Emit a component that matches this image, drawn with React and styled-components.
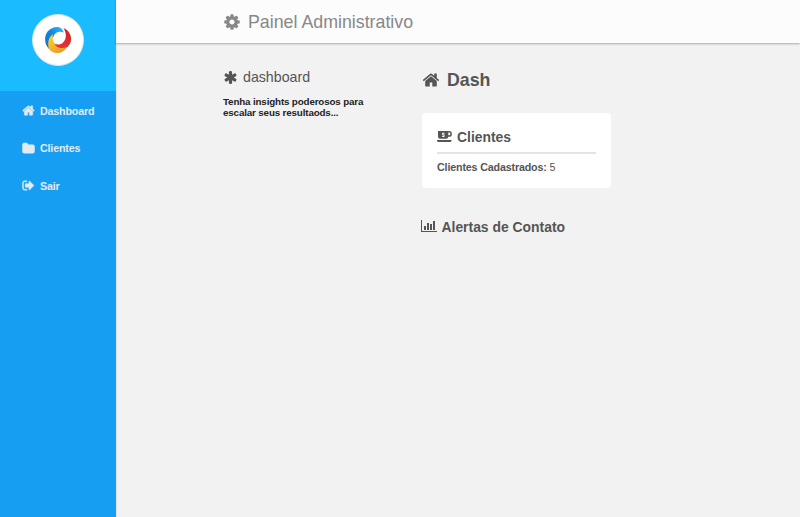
import React from "react";
import styled, { createGlobalStyle } from "styled-components";

const GlobalStyle = createGlobalStyle`
  * { box-sizing: border-box; }
  body {
    margin: 0;
    background: #f2f2f2;
    font-family: "Liberation Sans", Arial, sans-serif;
    color: #555;
  }
  h1, h2, h3, p { margin: 0; }
`;

const icons = {
  home: "M1472 992v480q0 26-19 45t-45 19h-384v-384h-256v384h-384q-26 0-45-19t-19-45v-480q0-1 .5-3t.5-3l575-474 575 474q1 2 1 6zm223-69l-62 74q-8 9-21 11h-3q-13 0-21-7l-692-577-692 577q-12 8-24 7-13-2-21-11l-62-74q-8-10-7-23.5t11-21.5l719-599q32-26 76-26t76 26l244 204v-195q0-14 9-23t23-9h192q14 0 23 9t9 23v408l219 182q10 8 11 21.5t-7 23.5z",
  folder: "M1728 608v704q0 92-66 158t-158 66h-1216q-92 0-158-66t-66-158v-960q0-92 66-158t158-66h320q92 0 158 66t66 158v32h672q92 0 158 66t66 158z",
  signOut: "M704 1440q0 4 1 20t.5 26.5-3 23.5-10 19.5-20.5 6.5h-320q-119 0-203.5-84.5t-84.5-203.5v-704q0-119 84.5-203.5t203.5-84.5h320q13 0 22.5 9.5t9.5 22.5q0 4 1 20t.5 26.5-3 23.5-10 19.5-20.5 6.5h-320q-66 0-113 47t-47 113v704q0 66 47 113t113 47h312l11.5 1 11.5 3 8 5.5 7 9 2 13.5zm928-544q0 26-19 45l-544 544q-19 19-45 19t-45-19-19-45v-288h-448q-26 0-45-19t-19-45v-384q0-26 19-45t45-19h448v-288q0-26 19-45t45-19 45 19l544 544q19 19 19 45z",
  cog: "M1152 896q0-106-75-181t-181-75-181 75-75 181 75 181 181 75 181-75 75-181zm512-109v222q0 12-8 23t-20 13l-185 28q-19 54-39 91 35 50 107 138 10 12 10 25t-9 23q-27 37-99 108t-94 71q-12 0-26-9l-138-108q-44 23-91 38-16 136-29 186-7 28-36 28h-222q-14 0-24.5-8.5t-11.5-21.5l-28-184q-49-16-90-37l-141 107q-10 9-25 9-14 0-25-11-126-114-165-168-7-10-7-23 0-12 8-23 15-21 51-66.5t54-70.5q-27-50-41-99l-183-27q-13-2-21-12.5t-8-23.5v-222q0-12 8-23t19-13l186-28q14-46 39-92-40-57-107-138-10-12-10-24 0-10 9-23 26-36 98.5-107.5t94.5-71.5q13 0 26 10l138 107q44-23 91-38 16-136 29-186 7-28 36-28h222q14 0 24.5 8.5t11.5 21.5l28 184q49 16 90 37l142-107q9-9 24-9 13 0 25 10 129 119 165 170 7 8 7 22 0 12-8 23-15 21-51 66.5t-54 70.5q26 50 41 98l183 28q13 2 21 12.5t8 23.5z",
  asterisk: "M1546 1050q46 26 59.5 77.5t-12.5 97.5l-64 110q-26 46-77.5 59.5t-97.5-12.5l-266-153v307q0 52-38 90t-90 38h-128q-52 0-90-38t-38-90v-307l-266 153q-46 26-97.5 12.5t-77.5-59.5l-64-110q-26-46-12.5-97.5t59.5-77.5l266-154-266-154q-46-26-59.5-77.5t12.5-97.5l64-110q26-46 77.5-59.5t97.5 12.5l266 153v-307q0-52 38-90t90-38h128q52 0 90 38t38 90v307l266-153q46-26 97.5-12.5t77.5 59.5l64 110q26 46 12.5 97.5t-59.5 77.5l-266 154z",
};

const Page = styled.div`
  display: flex;
  height: 517px;
  overflow: hidden;
`;

const Sidebar = styled.aside`
  flex: none;
  width: 116px;
  background: #169ff2;
  box-shadow: 0 0 2px rgba(0, 80, 130, 0.25);
`;

const LogoArea = styled.div`
  display: flex;
  justify-content: center;
  height: 91px;
  padding-top: 14px;
  background: #1bbbff;
`;

const LogoCircle = styled.div`
  display: flex;
  align-items: center;
  justify-content: center;
  width: 52px;
  height: 52px;
  border: 1px solid #d5e4ea;
  border-radius: 50%;
  background: #fff;
`;

const Menu = styled.nav`
  display: flex;
  flex-direction: column;
  padding: 1px 0 0 22px;
`;

const MenuItem = styled.a`
  display: flex;
  align-items: center;
  height: 37.6px;
  color: #e2ebf1;
  font-size: 10.7px;
  font-weight: 700;
  letter-spacing: -0.17px;
`;

const Glyph = styled.svg`
  flex: none;
  width: ${(p) => p.$size}px;
  height: ${(p) => p.$size}px;
  margin-right: ${(p) => p.$gap}px;
  fill: currentColor;
`;

const Main = styled.main`
  flex: 1;
`;

const TopBar = styled.header`
  display: flex;
  align-items: center;
  height: 43px;
  padding-left: 107px;
  background: #fcfcfc;
  box-shadow: 0 1px 2px rgba(0, 0, 0, 0.3);
`;

const Title = styled.h1`
  padding-top: 1px;
  color: #888;
  font-size: 17.8px;
  font-weight: 400;
`;

const TopIcon = styled.span`
  display: flex;
  color: #888;
`;

const Columns = styled.div`
  display: grid;
  grid-template-columns: 199px 190px;
  padding-left: 106px;
`;

const Intro = styled.section`
  padding: 24px 0 0 1px;
`;

const IntroTitle = styled.h2`
  display: flex;
  align-items: center;
  height: 20px;
  font-size: 14.2px;
  font-weight: 400;
`;

const IntroText = styled.p`
  margin-top: 10px;
  color: #222;
  font-size: 9.8px;
  font-weight: 700;
  letter-spacing: -0.15px;
  line-height: 10.6px;
`;

const Content = styled.section`
  padding-top: 24px;
`;

const PageTitle = styled.h2`
  display: flex;
  align-items: center;
  height: 26px;
  padding-left: 1px;
  font-size: 17.8px;
`;

const Card = styled.article`
  width: 189px;
  height: 75px;
  margin: 20px 0 0 1px;
  padding: 12px 15px 0;
  border-radius: 4px;
  background: #fff;
`;

const SectionTitle = styled.h3`
  display: flex;
  align-items: center;
  height: 24px;
  font-size: 13.9px;
`;

const CardTitle = styled(SectionTitle)`
  height: 29px;
  padding-bottom: 4px;
  border-bottom: 2px solid #e4e4e4;
`;

const Count = styled.p`
  margin-top: 6px;
  font-size: 10.7px;
  letter-spacing: -0.15px;
  line-height: 14px;
`;

const Alerts = styled.section`
  margin-top: 27px;
`;

const ChartGlyph = styled(Glyph)`
  margin-bottom: 2px;
`;

function Icon({ name, size, gap, weight = 0 }) {
  return (
    <Glyph viewBox="0 0 1792 1792" $size={size} $gap={gap} aria-hidden="true">
      <path d={icons[name]} stroke="currentColor" strokeWidth={weight} />
    </Glyph>
  );
}

function Logo() {
  return (
    <svg width="28" height="28" viewBox="0 0 28 28" aria-hidden="true">
      <defs>
        <linearGradient id="blue" x1="0" y1="1" x2="1" y2="0">
          <stop offset="0" stopColor="#1769c8" />
          <stop offset=".55" stopColor="#1487e4" />
          <stop offset="1" stopColor="#35bdf4" />
        </linearGradient>
        <linearGradient id="yellow" x1="0" y1="0" x2=".7" y2="1">
          <stop offset="0" stopColor="#ffdc26" />
          <stop offset="1" stopColor="#ee962b" />
        </linearGradient>
        <linearGradient id="red" x1="0" y1="0" x2="0" y2="1">
          <stop offset="0" stopColor="#c92026" />
          <stop offset="1" stopColor="#e83236" />
        </linearGradient>
      </defs>
      <path fill="url(#blue)" d="M5 23C-1 17 0 6 7.500 2.500 12.500 0 18 .5 19.700 6.500 14.500 4.500 10.500 6.500 9.300 11 6.500 13 4.500 18 5 23z" />
      <path fill="url(#yellow)" d="M5 23C3 17.500 4.500 11 9 8 7.800 14 10 18.500 14.500 20 17.500 21.500 20.500 21.500 23.500 20.500 19 28.500 9 29 5 23z" />
      <path fill="url(#red)" d="M19.500 2C28 5.500 29.500 16 23.500 21 18 23.500 12 21.500 10.800 18 19 20.500 25.500 12 19.500 2z" />
    </svg>
  );
}

function CupIcon() {
  return (
    <Glyph viewBox="0 0 15 15" $size={15} $gap={5} aria-hidden="true">
      <path
        fillRule="evenodd"
        d="M1 2H12a2.900 2.900 0 0 1 0 5.800H11.300A2 2 0 0 1 9.300 9.700H3A2 2 0 0 1 1 7.700zM11.300 3.500V6.300H12a1.400 1.400 0 0 0 0-2.800zM5.200 3.800V6.200H6.500V7H5.200V8H7.500V5.500H6.200V4.800H7.500V3.800z"
      />
      <path d="M0 11H14.500V12L13.500 13H1L0 12z" />
    </Glyph>
  );
}

function ChartIcon() {
  return (
    <ChartGlyph viewBox="0 0 16 16" $size={16} $gap={4.5} aria-hidden="true">
      <path d="M0 2H1V13H16V14H0zM3 8H5V12H3zM6 5H8V12H6zM9 6H11V12H9zM12 3H14V12H12z" />
    </ChartGlyph>
  );
}

const menu = [
  { icon: "home", label: "Dashboard" },
  { icon: "folder", label: "Clientes" },
  { icon: "signOut", label: "Sair" },
];

export default function App() {
  return (
    <>
      <GlobalStyle />
      <Page>
        <Sidebar>
          <LogoArea>
            <LogoCircle>
              <Logo />
            </LogoCircle>
          </LogoArea>
          <Menu>
            {menu.map((item) => (
              <MenuItem key={item.label}>
                <Icon name={item.icon} size={13} gap={5} weight={70} />
                {item.label}
              </MenuItem>
            ))}
          </Menu>
        </Sidebar>
        <Main>
          <TopBar>
            <TopIcon>
              <Icon name="cog" size={18} gap={7} />
            </TopIcon>
            <Title>Painel Administrativo</Title>
          </TopBar>
          <Columns>
            <Intro>
              <IntroTitle>
                <Icon name="asterisk" size={15} gap={5} />
                dashboard
              </IntroTitle>
              <IntroText>
                Tenha insights poderosos para
                <br />
                escalar seus resultaods...
              </IntroText>
            </Intro>
            <Content>
              <PageTitle>
                <Icon name="home" size={18} gap={7} />
                Dash
              </PageTitle>
              <Card>
                <CardTitle>
                  <CupIcon />
                  Clientes
                </CardTitle>
                <Count>
                  <b>Clientes Cadastrados:</b> 5
                </Count>
              </Card>
              <Alerts>
                <SectionTitle>
                  <ChartIcon />
                  Alertas de Contato
                </SectionTitle>
              </Alerts>
            </Content>
          </Columns>
        </Main>
      </Page>
    </>
  );
}
